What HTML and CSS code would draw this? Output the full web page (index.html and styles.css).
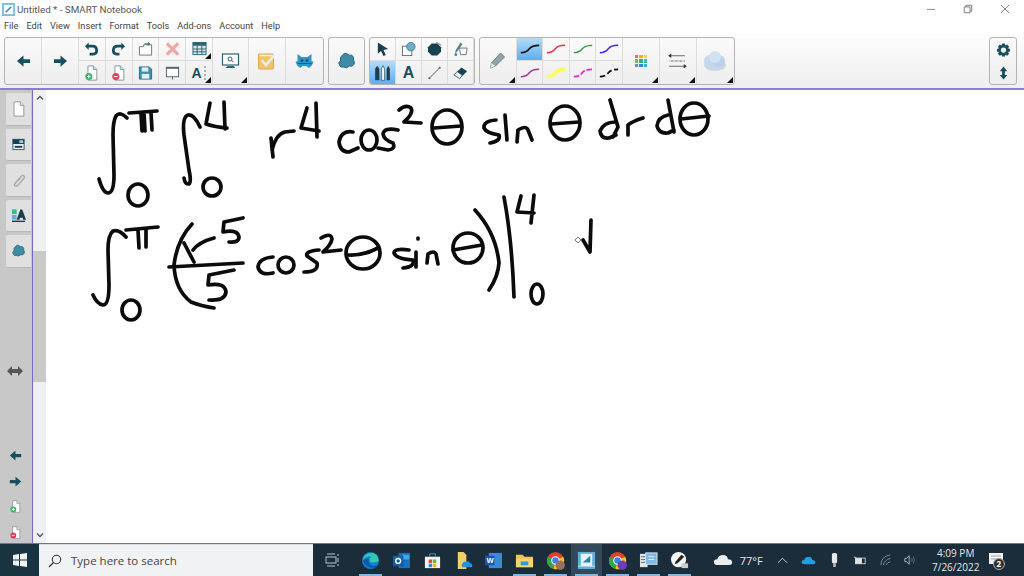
FILE: index.html
```html
<!DOCTYPE html>
<html lang="en">
<head>
<meta charset="utf-8">
<title>Untitled * - SMART Notebook</title>
<link rel="stylesheet" href="styles.css">
</head>
<body>
<svg class="defs" width="0" height="0" aria-hidden="true">
  <symbol id="arrow-l" viewBox="0 0 16 16"><path d="M8 2 L1 8 L8 14 V10 H15 V6 H8 Z" fill="#17505c"/></symbol>
  <symbol id="arrow-r" viewBox="0 0 16 16"><path d="M8 2 L15 8 L8 14 V10 H1 V6 H8 Z" fill="#17505c"/></symbol>
  <symbol id="page" viewBox="0 0 16 18"><path d="M3 1 H10 L14 5 V17 H3 Z" fill="#fff" stroke="#8a9598"/><path d="M10 1 V5 H14" fill="#dfe5e6" stroke="#8a9598"/></symbol>
  <symbol id="page-add" viewBox="0 0 16 18"><path d="M4 1 H10 L14 5 V17 H4 Z" fill="#fff" stroke="#7f8f92"/><path d="M10 1 V5 H14" fill="#dfe5e6" stroke="#7f8f92"/><circle cx="5" cy="13" r="4" fill="#3fb56a"/><path d="M3 13 H7 M5 11 V15" stroke="#fff" stroke-width="1.2"/></symbol>
  <symbol id="page-del" viewBox="0 0 16 18"><path d="M4 1 H10 L14 5 V17 H4 Z" fill="#fff" stroke="#7f8f92"/><path d="M10 1 V5 H14" fill="#dfe5e6" stroke="#7f8f92"/><circle cx="5" cy="13" r="4" fill="#e0415c"/><path d="M3 13 H7" stroke="#fff" stroke-width="1.2"/></symbol>
  <symbol id="puzzle" viewBox="0 0 20 20"><path d="M6 4 Q8 1 11 3 Q13 5 15 4 Q18 6 17 9 Q19 12 17 14 Q15 16 13 15 Q10 18 7 16 Q4 17 3 14 Q1 11 4 10 Q3 6 6 4 Z" fill="#3f8aa5" stroke="#2a6a80"/></symbol>
  <symbol id="chrome" viewBox="0 0 20 20"><circle cx="10" cy="10" r="9" fill="#e0402f"/><path d="M10 10 L2 6 A9 9 0 0 0 8 19 Z" fill="#2ea84f"/><path d="M10 10 L18 6 A9 9 0 0 1 8 19 Z" fill="#f5c518"/><circle cx="10" cy="10" r="4.5" fill="#fff"/><circle cx="10" cy="10" r="3.4" fill="#3b82e0"/></symbol>
  <symbol id="cloud" viewBox="0 0 24 14"><path d="M6 13 Q1 13 1 9 Q1 6 5 6 Q7 1 12 1 Q17 1 18 6 Q23 6 23 10 Q23 13 19 13 Z" fill="currentColor"/></symbol>
</svg>

<div class="app">
  <header class="titlebar">
    <svg class="app-icon" viewBox="0 0 14 14"><rect width="14" height="14" fill="#7dbce2"/><rect x="2" y="2" width="10" height="10" fill="#fff"/><path d="M4 10 L10 4" stroke="#3a86b8" stroke-width="1.6"/></svg>
    <span class="title">Untitled * - SMART Notebook</span>
    <div class="winctl">
      <svg class="wc" viewBox="0 0 12 12"><path d="M1 6.5 H11" stroke="#777"/></svg>
      <svg class="wc" viewBox="0 0 12 12"><path d="M1.5 3.5 H8.5 V10.5 H1.5 Z M3.5 3.5 V1.5 H10.5 V8.5 H8.5" fill="none" stroke="#666"/></svg>
      <svg class="wc" viewBox="0 0 12 12"><path d="M1 1 L11 11 M11 1 L1 11" stroke="#666"/></svg>
    </div>
  </header>

  <nav class="menubar">
    <span>File</span><span>Edit</span><span>View</span><span>Insert</span><span>Format</span><span>Tools</span><span>Add-ons</span><span>Account</span><span>Help</span>
  </nav>

  <div class="toolbar">
    <div class="group">
      <div class="btn w37"><svg class="i16" viewBox="0 0 16 16"><use href="#arrow-l"/></svg></div>
      <div class="btn w37"><svg class="i16" viewBox="0 0 16 16"><use href="#arrow-r"/></svg></div>
      <div class="grid g5">
        <div class="cell"><svg class="i16" viewBox="0 0 16 16"><path d="M5 1 L1 5 L5 9 V6.5 H9 Q12 6.5 12 9.5 Q12 12 9 12 H6 V15 H9 Q15 15 15 9.5 Q15 3.5 9 3.5 H5 Z" fill="#17505c"/></svg></div>
        <div class="cell"><svg class="i16" viewBox="0 0 16 16"><path d="M11 1 L15 5 L11 9 V6.5 H7 Q4 6.5 4 9.5 Q4 12 7 12 H9 V15 H7 Q1 15 1 9.5 Q1 3.5 7 3.5 H11 Z" fill="#17505c"/></svg></div>
        <div class="cell"><svg class="i16" viewBox="0 0 16 16"><path d="M1.5 5.5 H6 V3.5 H14.5 V14.5 H1.5 Z" fill="#fff" stroke="#64777c"/><path d="M7 2.5 H12 M10.5 1 L12.5 2.5 L10.5 4" stroke="#17505c" fill="none"/></svg></div>
        <div class="cell"><svg class="i16" viewBox="0 0 16 16"><path d="M2 2 L14 14 M14 2 L2 14" stroke="#f0a8a4" stroke-width="3.4"/></svg></div>
        <div class="cell tick"><svg class="i16" viewBox="0 0 16 16"><rect x="1" y="1" width="14" height="13" fill="#d9e6ea" stroke="#2f6270"/><rect x="1" y="1" width="14" height="3.5" fill="#2f6270"/><path d="M1 8 H15 M1 11 H15 M5.5 4 V14 M10.5 4 V14" stroke="#2f6270"/></svg></div>
        <div class="cell"><svg class="i16" viewBox="0 0 16 18"><use href="#page-add"/></svg></div>
        <div class="cell"><svg class="i16" viewBox="0 0 16 18"><use href="#page-del"/></svg></div>
        <div class="cell"><svg class="i16" viewBox="0 0 16 16"><path d="M1.5 1.5 H12 L14.5 4 V14.5 H1.5 Z" fill="#3f8fb0" stroke="#2a6a85"/><rect x="4" y="2" width="7" height="4.5" fill="#dfeef4"/><rect x="4" y="9" width="8" height="5" fill="#e9f3f7"/></svg></div>
        <div class="cell"><svg class="i16" viewBox="0 0 16 16"><rect x="1.5" y="2" width="13" height="10" fill="#fff" stroke="#4f6368"/><rect x="1" y="1.5" width="14" height="2" fill="#4f6368"/><path d="M8 12 V15" stroke="#4f6368"/></svg></div>
        <div class="cell tick"><span class="a-glyph">A</span><svg class="bars" viewBox="0 0 4 14"><path d="M1 1 H3 M1 5 H3 M1 9 H3 M1 13 H3" stroke="#8aa0a6" stroke-width="1.4"/></svg></div>
      </div>
      <div class="btn w36 tick"><svg class="i20" viewBox="0 0 20 20"><rect x="2" y="3" width="16" height="11" fill="#fff" stroke="#2f6270" stroke-width="1.2"/><circle cx="9.5" cy="8" r="2" fill="none" stroke="#2f6270"/><path d="M11 9.5 L13 11" stroke="#2f6270"/><path d="M5 17 H15 L13 15 H7 Z" fill="#2f6270"/></svg></div>
      <div class="btn w38"><svg class="i20" viewBox="0 0 20 20"><rect x="2" y="3" width="15" height="15" rx="1" fill="#f0c468" stroke="#dca94e"/><path d="M3 4.5 H16" stroke="#f7f0de" stroke-width="1.4"/><path d="M5 9 L9.5 14 L18 4" fill="none" stroke="#eef0ee" stroke-width="2.6"/></svg></div>
      <div class="btn w38"><svg class="i20" viewBox="0 0 20 20"><path d="M3 3 L7 6 H13 L17 3 V10 L19 11 L17 15 L14 17 L12 15 H8 L6 17 L3 15 L1 11 L3 10 Z" fill="#2a98cc"/><circle cx="7.5" cy="9.5" r="1.3" fill="#0d4a60"/><circle cx="12.5" cy="9.5" r="1.3" fill="#0d4a60"/><path d="M3 12.5 H17" stroke="#135e78"/></svg></div>
    </div>

    <div class="group">
      <div class="btn solo"><svg class="i20" viewBox="0 0 20 20"><use href="#puzzle"/></svg></div>
    </div>

    <div class="group">
      <div class="grid g4 tight">
        <div class="cell"><svg class="i16" viewBox="0 0 16 16"><path d="M3 1 L14 8 L9 9 L11.5 14.5 L9 15.5 L6.5 10 L3 13 Z" fill="#17414e"/></svg></div>
        <div class="cell"><svg class="i16" viewBox="0 0 16 16"><rect x="1.5" y="5" width="10" height="10" fill="#fff" stroke="#5a6f75"/><circle cx="10.5" cy="5.5" r="4.5" fill="#6fb0c8" stroke="#3f7f97"/></svg></div>
        <div class="cell"><svg class="i16" viewBox="0 0 16 16"><path d="M5 2 H11 L15 6 V11 L11 15 H5 L1 11 V6 Z" fill="#17414e"/><path d="M10 1 L15 4" stroke="#8a9a9e" stroke-width="1.4"/></svg></div>
        <div class="cell"><svg class="i16" viewBox="0 0 16 16"><path d="M7 7 H15 L14 14 H8 Z" fill="#fff" stroke="#607a82"/><path d="M8 1 L10 3 L5 10 L2 13 L3 9 Z" fill="#5f7c86"/><circle cx="3" cy="14" r="1.4" fill="#3f7f97"/></svg></div>
        <div class="cell active"><svg class="i20" viewBox="0 0 20 18"><path d="M3 5 L5 2 L7 5 V16 H3 Z" fill="#1f3f4c"/><path d="M9 5 L10.5 2 L12 5 V16 H9 Z" fill="#f0f6fa" stroke="#1f3f4c" stroke-width=".6"/><path d="M14 5 L15.5 2 L17 5 V16 H14 Z" fill="#1f3f4c"/></svg></div>
        <div class="cell"><span class="a-big">A</span></div>
        <div class="cell"><svg class="i16" viewBox="0 0 16 16"><path d="M2 14 L14 2" stroke="#7f8f94" stroke-width="1.2"/><circle cx="2.5" cy="13.5" r="1.2" fill="#5f7177"/><circle cx="13.5" cy="2.5" r="1.2" fill="#5f7177"/></svg></div>
        <div class="cell"><svg class="i16" viewBox="0 0 16 16"><path d="M1 10 L9 2 L15 6 L7 14 Z" fill="#17414e"/><path d="M1 10 L4.5 6.5 L10 10.5 L7 14 Z" fill="#e9eef0" stroke="#17414e" stroke-width=".7"/></svg></div>
      </div>
    </div>

    <div class="group">
      <div class="btn w37 tick"><svg class="i20" viewBox="0 0 20 20"><path d="M3 17 L4 12 L13 2 L17 6 L8 15 Z" fill="#8ea3ab" stroke="#6a7f87"/><path d="M3 17 L4 12 L8 15 Z" fill="#dfe7ea"/></svg></div>
      <div class="grid g4">
        <div class="cell active"><svg class="ink" viewBox="0 0 24 12"><path d="M2 10 Q8 10 11 6 Q14 2 22 2" fill="none" stroke="#0d0d12" stroke-width="1.8"/></svg></div>
        <div class="cell"><svg class="ink" viewBox="0 0 24 12"><path d="M2 10 Q8 10 11 6 Q14 2 22 2" fill="none" stroke="#e2334f" stroke-width="1.6"/></svg></div>
        <div class="cell"><svg class="ink" viewBox="0 0 24 12"><path d="M2 10 Q8 10 11 6 Q14 2 22 2" fill="none" stroke="#2f9a48" stroke-width="1.4"/></svg></div>
        <div class="cell"><svg class="ink" viewBox="0 0 24 12"><path d="M2 10 Q8 10 11 6 Q14 2 22 2" fill="none" stroke="#3a2ee0" stroke-width="1.6"/></svg></div>
        <div class="cell"><svg class="ink" viewBox="0 0 24 12"><path d="M2 10 Q8 10 11 6 Q14 2 22 2" fill="none" stroke="#a5348f" stroke-width="1.6"/></svg></div>
        <div class="cell"><svg class="ink" viewBox="0 0 24 12"><path d="M2 10 Q8 10 11 6 Q14 2 22 2" fill="none" stroke="#fcfc5a" stroke-width="4"/></svg></div>
        <div class="cell"><svg class="ink" viewBox="0 0 24 12"><path d="M2 10 Q8 10 11 6 Q14 2 22 2" fill="none" stroke="#f01fd0" stroke-width="2" stroke-dasharray="6 2"/></svg></div>
        <div class="cell"><svg class="ink" viewBox="0 0 24 12"><path d="M2 10 Q8 10 11 6 Q14 2 22 2" fill="none" stroke="#0d0d12" stroke-width="1.8" stroke-dasharray="6 3"/></svg></div>
      </div>
      <div class="btn w38 tick">
        <div class="swatches"><i class="s1"></i><i class="s2"></i><i class="s3"></i><i class="s4"></i><i class="s5"></i><i class="s6"></i><i class="s7"></i><i class="s8"></i><i class="s9"></i></div>
      </div>
      <div class="btn w37 tick"><svg class="i20" viewBox="0 0 20 16"><path d="M2 3 H17 M2 8 H17 M2 13 H17" stroke="#6b6b6b"/><path d="M2 8 H17" stroke="#fff" stroke-dasharray="2 2"/><path d="M4 1.5 L2 3 L4 4.5 M16 11.5 L18 13 L16 14.5" fill="#333" stroke="#333"/></svg></div>
      <div class="btn w38 tick"><svg class="blob" viewBox="0 0 24 22"><ellipse cx="12" cy="15" rx="11" ry="6" fill="#c9d6e4"/><circle cx="7" cy="11" r="6" fill="#c4d8ec"/><circle cx="16" cy="11" r="6" fill="#bcd2ea"/><circle cx="12" cy="7" r="6" fill="#d2e2f2"/></svg></div>
    </div>

    <div class="group right">
      <div class="col">
        <div class="cell"><svg class="i16" viewBox="0 0 16 16"><path d="M6.5 1 H9.5 L10 3.2 L12 2.2 L14 4.4 L12.8 6.2 L15 7 V9.5 L12.8 10.2 L14 12 L12 14 L10 13 L9.5 15 H6.5 L6 13 L4 14 L2 12 L3.2 10.2 L1 9.5 V7 L3.2 6.2 L2 4.4 L4 2.2 L6 3.2 Z" fill="#17505c"/><circle cx="8" cy="8" r="2.8" fill="#f4f4f4"/></svg></div>
        <div class="cell"><svg class="i16" viewBox="0 0 16 16"><path d="M8 1 L12 6 H9.5 V10 H12 L8 15 L4 10 H6.5 V6 H4 Z" fill="#17505c"/></svg></div>
      </div>
    </div>
  </div>

  <main class="work">
    <aside class="sidebar">
      <div class="tab"><svg class="i16" viewBox="0 0 16 18"><use href="#page"/></svg></div>
      <div class="tab"><svg class="i16" viewBox="0 0 16 16"><rect x="2" y="3" width="12" height="11" fill="#e5eef0" stroke="#2f5f6a"/><rect x="2" y="3" width="12" height="5" fill="#17414e"/><rect x="9" y="4" width="4" height="3" fill="#9fd0dc"/><rect x="4" y="10" width="8" height="2" fill="#17414e"/></svg></div>
      <div class="tab"><svg class="i16" viewBox="0 0 16 16"><path d="M4 12 L11 4 Q13 2 14 4 Q15 5 13 7 L7 14 Q5 15 4 14 Q3 13 5 11 L10 6" fill="none" stroke="#a8a8a8" stroke-width="1.4"/></svg></div>
      <div class="tab tab-a"><svg class="i16" viewBox="0 0 16 16"><rect x="1" y="2" width="5" height="5" fill="#3cb98e"/><rect x="1" y="8" width="5" height="5" fill="#6fa8d8"/><path d="M6 13 L10 2 H12 L16 13 H13 L12.4 11 H9.6 L9 13 Z" fill="#17414e"/><rect x="1" y="14" width="14" height="1.5" fill="#17414e"/></svg></div>
      <div class="tab"><svg class="i16" viewBox="0 0 20 20"><use href="#puzzle"/></svg></div>
      <svg class="side-resize" viewBox="0 0 16 10"><path d="M5 0 L0 5 L5 10 V7 H11 V10 L16 5 L11 0 V3 H5 Z" fill="#555"/></svg>
      <svg class="side-nav first" viewBox="0 0 16 16"><use href="#arrow-l"/></svg>
      <svg class="side-nav" viewBox="0 0 16 16"><use href="#arrow-r"/></svg>
      <svg class="side-nav" viewBox="0 0 16 18"><use href="#page-add"/></svg>
      <svg class="side-nav" viewBox="0 0 16 18"><use href="#page-del"/></svg>
    </aside>

    <div class="scrollbar">
      <svg class="chev" viewBox="0 0 8 5"><path d="M1 4.5 L4 1.5 L7 4.5" fill="none" stroke="#555" stroke-width="1.3"/></svg>
      <div class="thumb"></div>
      <svg class="chev" viewBox="0 0 8 5"><path d="M1 .5 L4 3.5 L7 .5" fill="none" stroke="#555" stroke-width="1.3"/></svg>
    </div>

    <div class="canvas">
      <svg class="inkboard" viewBox="45 90 979 453" aria-label="Handwritten integral working">
        <g class="stroke">
          <path d="M126 118 Q119 111 115 116 Q112 121 112 135 L113 175 Q113 193 107 193 Q102 193 98 179"/>
          <path d="M128 113 L156 111 M140 113 L141 131 M143 113 L144 131 M150 112 L151 130"/>
          <ellipse cx="137" cy="195" rx="10" ry="11"/>
          <path d="M199 127 Q193 114 187 115 Q181 117 183 135 L188 170 Q191 184 187 184 Q184 184 183 178"/>
          <path d="M209 103 L205 124 Q214 127 226 128 M223 102 L224 129"/>
          <ellipse cx="211" cy="187" rx="9" ry="9"/>
          <path d="M270 138 L272 157 M271 150 Q275 134 284 132 L293 131"/>
          <path d="M306 108 L300 128 L318 131 M315 103 L316 137"/>
          <path d="M352 132 Q340 130 338 142 Q339 152 348 152 L357 148"/>
          <ellipse cx="368" cy="140" rx="8" ry="10"/>
          <path d="M397 130 Q383 127 382 134 Q383 140 392 143 Q395 149 387 150 L377 148"/>
          <path d="M398 110 Q405 104 410 108 Q413 113 403 122 L420 123"/>
          <ellipse cx="446" cy="127" rx="15" ry="17"/>
          <path d="M433 128 L460 126"/>
          <path d="M495 120 Q482 121 483 128 Q485 133 498 135 Q500 141 489 143"/>
          <path d="M504 115 L506 140"/>
          <path d="M516 142 L517 130 Q525 125 527 130 L531 140"/>
          <ellipse cx="564" cy="123" rx="15" ry="17"/>
          <path d="M550 124 L578 122"/>
          <path d="M609 100 L617 127 L612 137 M614 122 Q603 122 599 131 Q600 139 608 138 L615 135"/>
          <path d="M627 135 L627 125 Q632 121 642 118"/>
          <path d="M667 100 L673 132 M667 115 Q657 117 656 126 Q658 134 667 133 L673 130"/>
          <ellipse cx="693" cy="119" rx="14" ry="16"/>
          <path d="M680 119 L708 116"/>

          <path d="M125 237 Q118 229 112 231 Q107 235 107 250 L108 285 Q108 305 102 305 Q96 304 92 295"/>
          <path d="M125 230 L157 227 M137 230 L138 248 M145 230 L145 247"/>
          <ellipse cx="130" cy="310" rx="9" ry="10"/>
          <path d="M191 224 Q176 240 173 265 Q174 290 190 302 Q200 306 213 308"/>
          <path d="M168 267 L242 263"/>
          <path d="M183 243 L193 262 M192 250 Q198 242 213 238"/>
          <path d="M242 218 L223 222 L222 232 Q237 229 238 237 Q238 243 228 242"/>
          <path d="M233 270 L208 275 L207 285 Q224 282 225 292 Q224 301 208 300"/>
          <path d="M272 257 Q258 258 257 267 Q259 276 272 273"/>
          <ellipse cx="285" cy="265" rx="8" ry="8"/>
          <path d="M318 250 Q304 251 306 256 L316 263 Q318 272 303 272"/>
          <path d="M320 238 Q330 232 331 239 Q330 245 322 252 L340 250"/>
          <ellipse cx="362" cy="253" rx="17" ry="16"/>
          <path d="M347 255 Q362 256 377 248"/>
          <path d="M408 250 Q393 248 393 253 Q395 259 412 260 Q414 267 402 268"/>
          <path d="M415 252 L415 267"/>
          <path d="M417 238 L417 239"/>
          <path d="M426 263 L427 254 Q433 250 435 254 L437 264"/>
          <ellipse cx="467" cy="248" rx="15" ry="15"/>
          <path d="M452 250 L481 245"/>
          <path d="M474 210 Q495 233 498 263 Q497 277 488 290"/>
          <path d="M503 197 Q511 240 513 297"/>
          <path d="M520 196 L516 212 L533 213 M533 195 L530 223"/>
          <ellipse cx="536" cy="294" rx="6" ry="10"/>
          <path d="M582 240 L589 252 L590 220"/>
        </g>
        <path class="cursor" d="M577 237 L580 240 L577 243 L574 240 Z"/>
      </svg>
    </div>
  </main>

  <footer class="taskbar">
    <div class="start"><svg class="win" viewBox="0 0 14 14"><path d="M0 2 L6 1 V6.5 H0 Z M7 .9 L14 0 V6.5 H7 Z M0 7.5 H6 V13 L0 12 Z M7 7.5 H14 V14 L7 13.1 Z" fill="#f2f6f8"/></svg></div>
    <div class="search">
      <svg class="mag" viewBox="0 0 14 14"><circle cx="8.5" cy="5.5" r="4.2" fill="none" stroke="#333" stroke-width="1.1"/><path d="M5.5 8.5 L1 13" stroke="#333" stroke-width="1.2"/></svg>
      <span>Type here to search</span>
    </div>
    <div class="task-icons">
      <div class="tk"><svg class="t16" viewBox="0 0 16 16"><path d="M3 2 H11 M3 14 H11" stroke="#b8c4cc"/><rect x="2" y="5" width="10" height="6" fill="none" stroke="#b8c4cc"/><path d="M14 2 V4 M14 6 V10 M14 12 V14" stroke="#b8c4cc"/></svg></div>
      <div class="tk run"><svg class="t20" viewBox="0 0 20 20"><circle cx="10" cy="10" r="9" fill="#1680d0"/><path d="M2 10 Q3 2 11 2 Q18 2 18.5 10 Q18 12 12 12 Q9 12 9 9 Q9 6 12 6 Q6 4 2 10 Z" fill="#35c8b0"/><path d="M2 10 Q5 18 13 18 Q16 17 17 15 Q12 17 9 14 Q7 11 8 8 Q4 8 2 10 Z" fill="#0b57a8"/></svg></div>
      <div class="tk"><svg class="t20" viewBox="0 0 20 20"><rect x="7" y="2" width="12" height="16" fill="#1a6fc0"/><rect x="11" y="4" width="7" height="5" fill="#3fa6e8"/><rect x="1" y="5" width="11" height="11" rx="1" fill="#0f5fa8"/><circle cx="6.5" cy="10.5" r="2.6" fill="none" stroke="#fff" stroke-width="1.4"/></svg></div>
      <div class="tk"><svg class="t20" viewBox="0 0 20 20"><path d="M2 6 H18 V18 H2 Z" fill="#f2f2f2"/><path d="M7 6 V3 H13 V6" fill="none" stroke="#3aa0c8"/><rect x="6" y="9" width="3.6" height="3.6" fill="#e34a35"/><rect x="10.4" y="9" width="3.6" height="3.6" fill="#6cb33f"/><rect x="6" y="13.4" width="3.6" height="3.6" fill="#2a8ce0"/><rect x="10.4" y="13.4" width="3.6" height="3.6" fill="#f5b915"/></svg></div>
      <div class="tk"><svg class="t20" viewBox="0 0 20 20"><path d="M4 1 H10 L13 4 V19 H4 Z" fill="#f0d068"/><path d="M8 16 Q8 11 13 11 Q16 10 17 13 Q20 13 19 17 H9 Z" fill="#2b8fd8"/></svg></div>
      <div class="tk"><svg class="t20" viewBox="0 0 20 20"><rect x="5" y="2" width="14" height="16" fill="#3f88d8"/><rect x="1" y="5" width="10" height="10" fill="#1c55a8"/><text class="wd" x="2.5" y="13">W</text></svg></div>
      <div class="tk run"><svg class="t20" viewBox="0 0 20 20"><path d="M1 4 H8 L10 6 H19 V17 H1 Z" fill="#f2c14e"/><rect x="1" y="8" width="18" height="9" fill="#f7d56e"/><rect x="6" y="11" width="8" height="4" fill="#2d9ad8"/></svg></div>
      <div class="tk run"><svg class="t20" viewBox="0 0 20 20"><use href="#chrome"/><circle cx="15" cy="15" r="5" fill="#9a7060"/></svg></div>
      <div class="tk run cur"><svg class="t20" viewBox="0 0 20 20"><rect x="1" y="1" width="18" height="18" fill="#5fb0d8"/><rect x="4" y="3" width="12" height="13" fill="#e8f4fa"/><path d="M6 12 L14 5 L14 12 Z" fill="#2e7fb0"/><path d="M1 16 H19" stroke="#c8e2f0"/></svg></div>
      <div class="tk run"><svg class="t20" viewBox="0 0 20 20"><use href="#chrome"/><circle cx="15" cy="15" r="5" fill="#6a3fb8"/></svg></div>
      <div class="tk run"><svg class="t20" viewBox="0 0 20 20"><rect x="1" y="3" width="8" height="14" fill="#dfe6e8"/><path d="M2 6 H8 M2 9 H8 M2 12 H8" stroke="#667"/><rect x="7" y="2" width="12" height="12" fill="#7fb8e0" stroke="#d0e4f0"/><path d="M10 6 H16 M10 9 H16" stroke="#e8f4fa"/></svg></div>
      <div class="tk run"><svg class="t20" viewBox="0 0 20 20"><circle cx="9" cy="9" r="8" fill="#f4f4f4"/><path d="M5 14 L6 11 L12 4 L15 6 L8 13 Z" fill="#222"/><rect x="12" y="13" width="7" height="5" fill="#c8d0d4"/></svg></div>
    </div>
    <div class="tray">
      <svg class="t-cloud" viewBox="0 0 24 14"><use href="#cloud"/></svg>
      <span class="temp">77°F</span>
      <svg class="t-chev" viewBox="0 0 12 7"><path d="M1 6 L6 1 L11 6" fill="none" stroke="#d0d8dc"/></svg>
      <svg class="t-od" viewBox="0 0 24 14"><use href="#cloud"/></svg>
      <svg class="t-usb" viewBox="0 0 8 18"><rect x="1" y="1" width="6" height="12" rx="2" fill="#e8e8e8"/><rect x="2.5" y="13" width="3" height="4" fill="#bbb"/></svg>
      <svg class="t-bat" viewBox="0 0 16 10"><rect x="3" y="2" width="12" height="7" fill="none" stroke="#e0e0e0"/><rect x="3" y="2" width="8" height="7" fill="#e0e0e0"/><path d="M1 1 H4" stroke="#e0e0e0"/></svg>
      <svg class="t-wifi" viewBox="0 0 14 14"><path d="M1 13 Q1 3 12 1 M4 13 Q5 7 12 5 M7 13 Q8 10 12 9" fill="none" stroke="#8a969c"/></svg>
      <svg class="t-vol" viewBox="0 0 14 14"><path d="M1 5 H3 L6 2 V12 L3 9 H1 Z" fill="none" stroke="#c0c8cc"/><path d="M9 5 Q10 7 9 9 M11 3 Q13 7 11 11" fill="none" stroke="#6c787e"/></svg>
      <div class="clock"><span>4:09 PM</span><span>7/26/2022</span></div>
      <div class="notif">
        <svg class="t16" viewBox="0 0 16 16"><path d="M1 1 H15 V12 H9 L6 15 V12 H1 Z" fill="#f2f2f2"/><path d="M3 4 H13 M3 7 H13" stroke="#9aa"/></svg>
        <b class="badge">2</b>
      </div>
    </div>
  </footer>
</div>
</body>
</html>
```
FILE: styles.css
```css
* { box-sizing: border-box; }
html, body { margin: 0; padding: 0; }
body { width: 1024px; height: 576px; overflow: hidden; font-family: "Open Sans", "Noto Sans", sans-serif; background: #fff; }
.defs { position: absolute; }
svg { display: block; flex: none; }

.app { width: 1024px; height: 576px; display: flex; flex-direction: column; }

.titlebar { height: 18px; display: flex; align-items: center; padding-left: 2px; background: #fff; flex: none; }
.app-icon { width: 13px; height: 13px; margin-right: 2px; }
.title { font: 9.8px Roboto, sans-serif; color: #555; }
.winctl { margin-left: auto; display: flex; gap: 27px; padding-right: 14px; }
.wc { width: 10px; height: 10px; }

.menubar { height: 15px; display: flex; align-items: center; gap: 8px; padding-left: 4px; font: 9.2px Roboto, sans-serif; color: #444; background: #fff; flex: none; }

.toolbar { height: 57px; flex: none; display: flex; gap: 4px; padding: 4px 0 0 4px; background: linear-gradient(#fdfdfd, #efefef); border-bottom: 2px solid #8b7bdc; }
.group { display: flex; height: 48px; border: 1px solid #b4b4b4; border-radius: 3px; background: linear-gradient(#fafafa, #eeeeee); overflow: hidden; }
.group.right { margin-left: auto; margin-right: 7px; }
.btn { height: 100%; display: flex; align-items: center; justify-content: center; border-right: 1px solid #dcdcdc; position: relative; flex: none; }
.btn:last-child { border-right: 0; }
.w36 { width: 36px; } .w37 { width: 37px; } .w38 { width: 37px; }
.solo { width: 35px; }
.grid { display: grid; grid-template-rows: 1fr 1fr; height: 100%; flex: none; }
.g5 { grid-template-columns: repeat(5, 26.8px); }
.g4 { grid-template-columns: repeat(4, 26.5px); }
.g4.tight { grid-template-columns: repeat(4, 26px); }
.cell { display: flex; align-items: center; justify-content: center; border-right: 1px solid #dcdcdc; border-bottom: 1px solid #dcdcdc; position: relative; }
.cell:nth-last-child(-n+4) { border-bottom: 0; }
.g5 .cell:nth-last-child(5) { border-bottom: 0; }
.active { background: linear-gradient(#b5dcf8, #5eaeee); }
.tick::after { content: ""; position: absolute; right: 1px; bottom: 1px; border-style: solid; border-width: 0 0 6px 6px; border-color: transparent transparent #111 transparent; }

.i16 { width: 15px; height: 16px; }
.i20 { width: 21px; height: 20px; }
.ink { width: 22px; height: 12px; }
.blob { width: 24px; height: 24px; }
.a-glyph { font: 700 14px "Liberation Sans", sans-serif; color: #17505c; }
.bars { width: 4px; height: 14px; margin-left: 1px; }
.a-big { font: 700 16px "Liberation Sans", sans-serif; color: #17505c; }

.swatches { display: grid; grid-template-columns: repeat(3, 3.6px); grid-auto-rows: 3.6px; gap: 1px; }
.swatches i { display: block; }
.s1 { background: #e96a5e; } .s2 { background: #f3a23c; } .s3 { background: #f6d24a; }
.s4 { background: #6cc04a; } .s5 { background: #35b36e; } .s6 { background: #45b8b0; }
.s7 { background: #3fa0e0; } .s8 { background: #3f7fd0; } .s9 { background: #27b8d0; }

.col { width: 26px; display: flex; flex-direction: column; height: 100%; }
.col .cell { flex: 1; border-right: 0; }
.col .cell:last-child { border-bottom: 0; }

.work { flex: 1; min-height: 0; display: flex; border-bottom: 1px solid #7668d0; }

.sidebar { width: 33px; flex: none; background: #c8c8c8; border-right: 1px solid #7668d0; display: flex; flex-direction: column; align-items: flex-end; padding: 3px 1px 0 0; gap: 3px; }
.tab { width: 25px; height: 32.5px; background: #e0e0e0; border-radius: 2px 0 0 2px; display: flex; align-items: center; justify-content: center; border-bottom: 1px solid #b8b8b8; }
.side-resize { width: 16px; height: 10px; margin: 95.5px 8px 0 0; }
.side-nav { width: 13px; height: 13px; margin: 9.7px 9px 0 0; }
.side-nav.first { margin-top: 70px; }

.scrollbar { width: 13px; flex: none; background: #eef0f3; display: flex; flex-direction: column; align-items: center; padding: 5px 0; }
.chev { width: 8px; height: 5px; }
.thumb { width: 13px; height: 131px; background: #c9c9c9; margin-top: 151px; margin-bottom: auto; }

.canvas { flex: 1; position: relative; background: #fff; overflow: hidden; }
.inkboard { position: absolute; left: 0; top: 0; width: 979px; height: 453px; }
.stroke { fill: none; stroke: #0b0b0b; stroke-width: 3.7; stroke-linecap: round; stroke-linejoin: round; }
.cursor { fill: #fff; stroke: #777; }

.taskbar { height: 32px; flex: none; display: flex; align-items: stretch; background: #1b2c3b; }
.start { width: 39px; display: flex; align-items: center; justify-content: center; background: #1a3340; }
.win { width: 14px; height: 14px; }
.search { width: 274px; background: #f0f2f3; border-top: 1px solid #d8dcde; display: flex; align-items: center; gap: 9px; padding-left: 9px; font-size: 11.5px; color: #444; }
.mag { width: 14px; height: 14px; }
.task-icons { display: flex; margin-left: 4px; }
.tk { width: 30.9px; display: flex; align-items: center; justify-content: center; position: relative; }
.tk:first-child { margin-right: 7px; }
.run::after { content: ""; position: absolute; left: 4px; right: 4px; bottom: 0; height: 2px; background: #7fb8e0; }
.cur { background: #33495a; }
.t16 { width: 16px; height: 16px; }
.t20 { width: 19px; height: 19px; }
.wd { font: 700 8px "Liberation Sans", sans-serif; fill: #fff; }

.tray { flex: 1; display: flex; align-items: center; color: #e4e8ea; padding-left: 18px; }
.t-cloud { width: 20px; height: 12px; color: #e8edf0; }
.temp { font-size: 11px; margin-left: 7px; width: 24px; }
.t-chev { width: 11px; height: 7px; margin-left: 13px; }
.t-od { width: 15px; height: 9px; margin-left: 13px; color: #1f9fe0; }
.t-usb { width: 7px; height: 16px; margin-left: 15px; }
.t-bat { width: 13px; height: 9px; margin-left: 15px; }
.t-wifi { width: 12px; height: 12px; margin-left: 14px; }
.t-vol { width: 12px; height: 12px; margin-left: 12px; }
.clock { display: flex; flex-direction: column; align-items: center; font-size: 10px; line-height: 14px; margin-left: 15px; width: 50px; }
.notif { position: relative; margin-left: 7px; }
.badge { position: absolute; left: 5px; top: 6px; width: 12px; height: 12px; border-radius: 50%; background: #333; border: 1px solid #aaa; font: 700 8px/10px "Open Sans", sans-serif; color: #fff; text-align: center; }
```
